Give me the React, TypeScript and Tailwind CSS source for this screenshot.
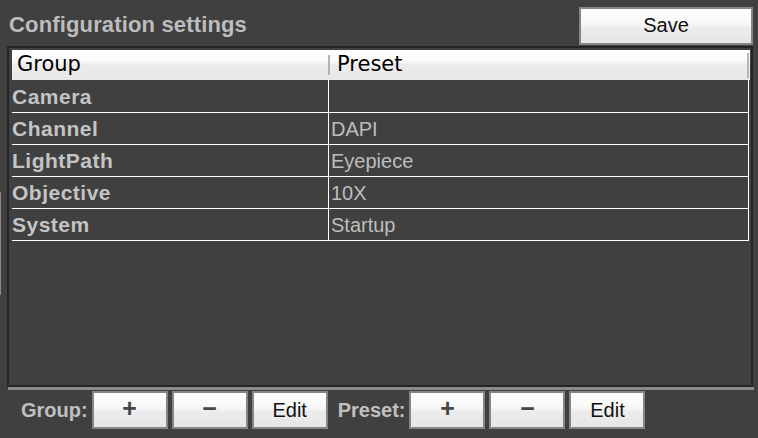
import React from "react";

const rows: [string, string][] = [
  ["Camera", ""],
  ["Channel", "DAPI"],
  ["LightPath", "Eyepiece"],
  ["Objective", "10X"],
  ["System", "Startup"],
];

function Btn({ children, className = "" }: { children: React.ReactNode; className?: string }) {
  return (
    <div
      className={
        "flex items-center justify-center border-2 border-[#858585] bg-[linear-gradient(#ffffff,#f6f6f6_45%,#ececec_55%,#e6e6e6)] text-[#111] " +
        className
      }
    >
      {children}
    </div>
  );
}

export default function App() {
  return (
    <div
      className="relative w-[758px] h-[438px] bg-[#404040] overflow-hidden flex flex-col"
      style={{ fontFamily: '"Liberation Sans", Arial, sans-serif' }}
    >
      <div className="absolute left-0 top-[192px] w-[1px] h-[103px] bg-[#8a8a8a]" />
      {/* top bar */}
      <div className="h-[46px] flex items-start shrink-0">
        <div className="pl-[9px] pt-[14px] text-[22px] leading-[22px] font-bold tracking-[0.15px] text-[#bdbdbd]">
          Configuration settings
        </div>
        <Btn className="ml-auto mt-[7px] mr-[5px] w-[174px] h-[38px] text-[20px] leading-[20px] pb-[3px]">
          Save
        </Btn>
      </div>
      {/* scroll pane */}
      <div className="ml-[7px] w-[746px] h-[341px] border-2 border-[#252525] pt-[2px] pl-[3px] pr-[1px] shrink-0">
        <div
          className="h-[30px] flex items-center bg-[linear-gradient(#ffffff,#fbfbfb_35%,#ececec_50%,#e8e8e8)] text-black text-[21px]"
          style={{ fontFamily: '"DejaVu Sans", sans-serif' }}
        >
          <div className="w-[316px] pl-[5px]">Group</div>
          <div className="w-[2px] h-[20px] bg-[#b3b3b3]" />
          <div className="pl-[7px] flex-1">Preset</div>
          <div className="w-[2px] h-[25px] bg-[#b8b8b8] mr-[1px]" />
        </div>
        {rows.map(([g, p], i) => (
          <div
            key={g}
            className={
              "flex w-[737px] border-b border-white " + (i === 0 ? "h-[33px]" : "h-[32px]")
            }
          >
            <div className="w-[316px] flex items-center pt-[1px] text-[21px] font-bold tracking-[0.5px] text-[#c4c4c4]">
              {g}
            </div>
            <div className="flex-1 flex items-center pl-[2px] pt-[1px] border-l border-r border-white text-[20px] text-[#bdbdbd]">
              {p}
            </div>
          </div>
        ))}
      </div>
      <div className="ml-[8px] w-[746px] h-[3px] bg-[#8c8c8c] shrink-0" />
      {/* bottom bar */}
      <div className="pt-[1px] pl-[21px] flex items-center shrink-0">
        <div className="text-[20px] font-bold text-[#c0c0c0] mr-[4px]">Group:</div>
        <div className="flex gap-[4px]">
          <Btn className="w-[76px] h-[38px] text-[25px] font-bold text-[#474747] pb-[2px]">+</Btn>
          <Btn className="w-[76px] h-[38px] text-[25px] font-bold text-[#474747] pb-[2px]">−</Btn>
          <Btn className="w-[76px] h-[38px] text-[20px]">Edit</Btn>
        </div>
        <div className="ml-[10px] text-[20px] font-bold text-[#c0c0c0] mr-[4px]">Preset:</div>
        <div className="flex gap-[4px]">
          <Btn className="w-[76px] h-[38px] text-[25px] font-bold text-[#474747] pb-[2px]">+</Btn>
          <Btn className="w-[76px] h-[38px] text-[25px] font-bold text-[#474747] pb-[2px]">−</Btn>
          <Btn className="w-[76px] h-[38px] text-[20px]">Edit</Btn>
        </div>
      </div>
    </div>
  );
}
